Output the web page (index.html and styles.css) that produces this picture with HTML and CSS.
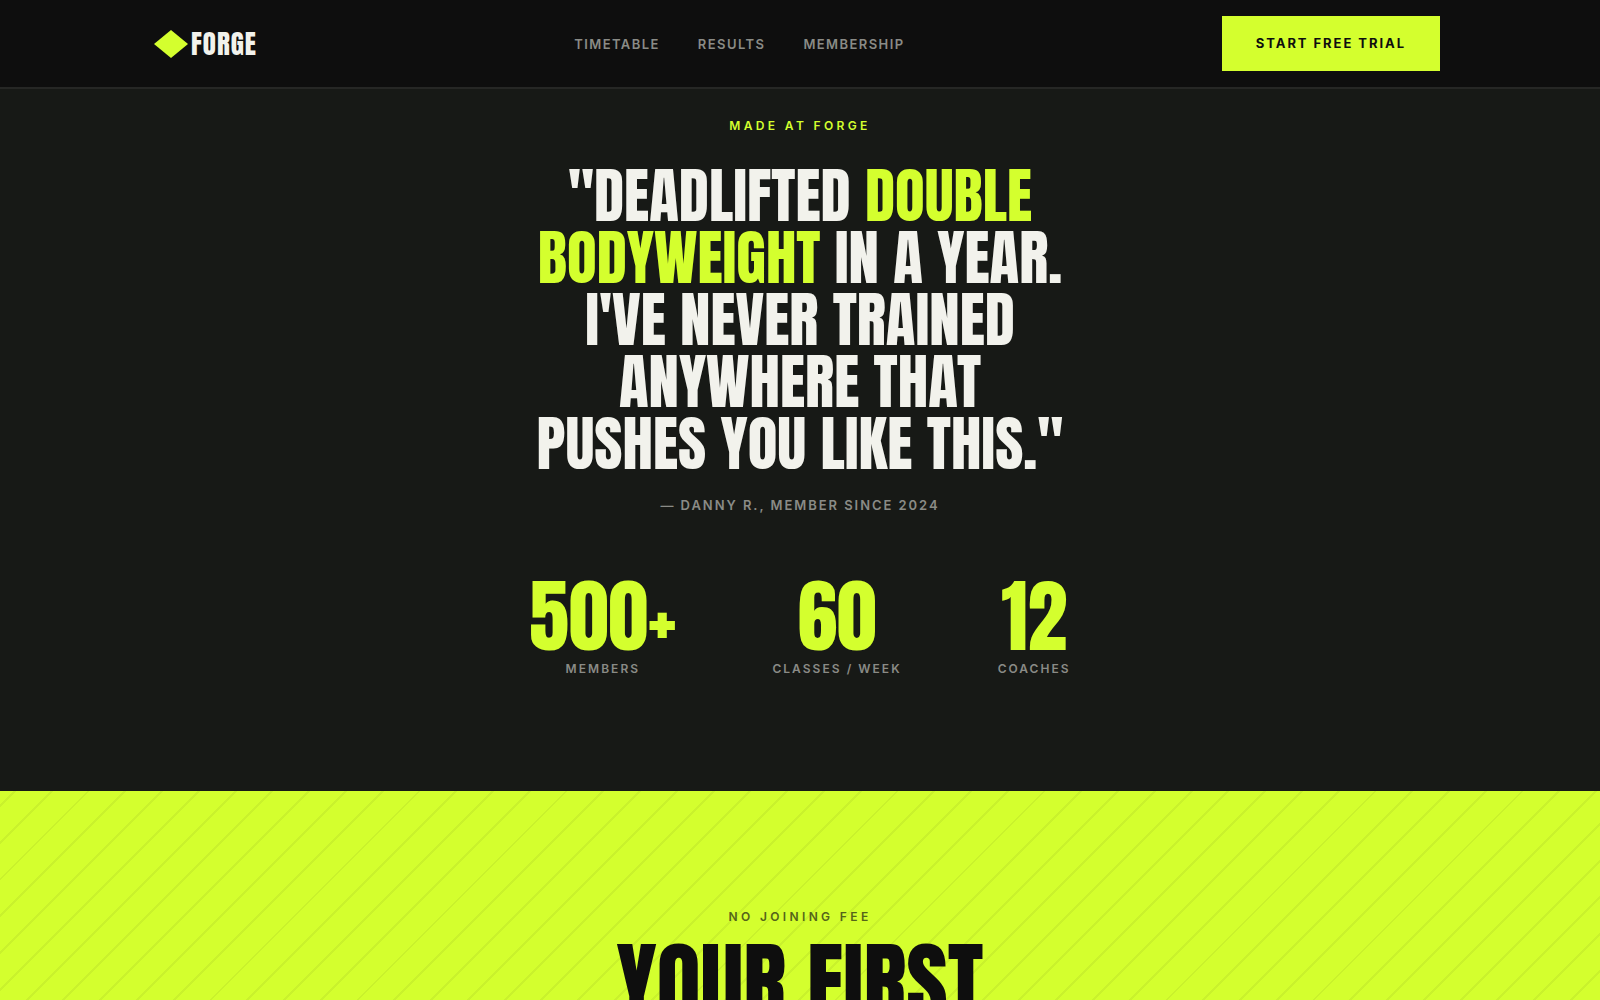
FILE: index.html
```html
<!DOCTYPE html>
<html lang="en">
<head>
<meta charset="utf-8">
<meta name="viewport" content="width=device-width, initial-scale=1">
<title>Forge</title>
<link rel="stylesheet" href="styles.css">
</head>
<body>
<header class="site-header">
  <div class="site-header-inner">
    <a class="logo" href="#top">
      <svg class="logo-mark" viewBox="0 0 34 28" aria-hidden="true"><path d="M17 0 34 14 17 28 0 14Z" fill="currentColor"/></svg>
      <span>FORGE</span>
    </a>
    <nav class="nav">
      <a href="#timetable">TIMETABLE</a>
      <a href="#results">RESULTS</a>
      <a href="#membership">MEMBERSHIP</a>
    </nav>
    <button class="trial-button" type="button">START FREE TRIAL</button>
  </div>
</header>
<main>
  <section class="results" id="results">
    <p class="eyebrow">MADE AT FORGE</p>
    <blockquote class="quote">"DEADLIFTED <em>DOUBLE<br>BODYWEIGHT</em> IN A YEAR.<br>I'VE NEVER TRAINED<br>ANYWHERE THAT<br>PUSHES YOU LIKE THIS."</blockquote>
    <p class="cite">— DANNY R., MEMBER SINCE 2024</p>
    <dl class="stats">
      <div class="stat"><dd>500+</dd><dt>MEMBERS</dt></div>
      <div class="stat"><dd>60</dd><dt>CLASSES / WEEK</dt></div>
      <div class="stat"><dd>12</dd><dt>COACHES</dt></div>
    </dl>
  </section>
  <section class="offer" id="membership">
    <p class="eyebrow eyebrow-dark">NO JOINING FEE</p>
    <h2 class="offer-title">YOUR FIRST</h2>
  </section>
</main>
</body>
</html>
```
FILE: styles.css
```css
:root {
  --ink: #0e0e0e;
  --panel: #171916;
  --lime: #d4ff2e;
  --paper: #f2f2ec;
  --muted: #8a8b86;
  --display: Anton, Impact, "Liberation Sans", sans-serif;
}

* { box-sizing: border-box; margin: 0; }

body {
  background: var(--panel);
  color: var(--paper);
  font-family: Inter, "Liberation Sans", sans-serif;
}

.site-header {
  position: sticky;
  top: 0;
  z-index: 1;
  background: var(--ink);
  border-bottom: 2px solid #262725;
}

.site-header-inner {
  display: flex;
  align-items: center;
  justify-content: space-between;
  max-width: 1280px;
  margin: 0 auto;
  padding: 16px 0;
}

.logo {
  display: flex;
  align-items: center;
  gap: 3px;
  margin-left: -6px;
  color: var(--paper);
  font: 27px/28px var(--display);
  letter-spacing: 1px;
  text-decoration: none;
}

.logo-mark { width: 34px; height: 28px; color: var(--lime); }

.nav { display: flex; gap: 38px; }

.nav a {
  color: var(--muted);
  font-size: 13px;
  line-height: 18px;
  font-weight: 600;
  letter-spacing: 0.11em;
  text-decoration: none;
}

.trial-button {
  padding: 17px 34px;
  border: 0;
  background: var(--lime);
  color: var(--ink);
  font: 700 13px/21px Inter, "Liberation Sans", sans-serif;
  letter-spacing: 0.15em;
}

.results {
  display: flex;
  flex-direction: column;
  align-items: center;
  padding: 27px 24px 112px;
  text-align: center;
}

.eyebrow {
  color: var(--lime);
  font-size: 12px;
  line-height: 20px;
  font-weight: 600;
  letter-spacing: 0.28em;
}

.quote {
  margin-top: 28px;
  font: 61px/62px var(--display);
}

.quote em { color: var(--lime); font-style: normal; }

.cite {
  margin-top: 21px;
  color: var(--muted);
  font-size: 13px;
  line-height: 20px;
  font-weight: 600;
  letter-spacing: 0.15em;
}

.stats { display: flex; gap: 96px; margin-top: 64px; }

.stat dd {
  color: var(--lime);
  font: 80px/74px var(--display);
}

.stat dt {
  margin-top: 6px;
  color: var(--muted);
  font-size: 12px;
  line-height: 20px;
  font-weight: 600;
  letter-spacing: 0.17em;
}

.offer {
  min-height: 583px;
  padding: 116px 24px;
  background: repeating-linear-gradient(-45deg, transparent 0 24px, rgba(0, 0, 0, .05) 24px 26px) var(--lime);
  color: var(--ink);
  text-align: center;
}

.eyebrow-dark { color: #55641a; }

.offer-title {
  margin-top: 12px;
  font: 90px/90px var(--display);
}
```
